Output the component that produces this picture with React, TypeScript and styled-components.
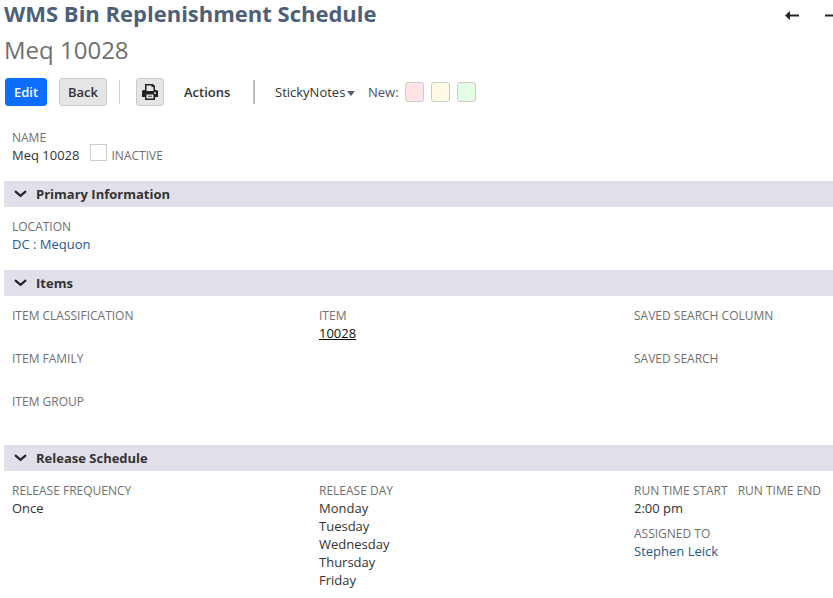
import React from 'react'
import styled, { createGlobalStyle } from 'styled-components'

const GlobalStyle = createGlobalStyle`
    html, body {
        margin: 0;
        padding: 0;
        background: #fff;
        overflow: hidden;
    }

    body {
        font-family: 'Open Sans', 'Liberation Sans', sans-serif;
        font-size: 13px;
        color: #333;
    }
`

const Page = styled.div`
    width: 833px;
    height: 598px;
    overflow: hidden;
    box-sizing: border-box;
    padding-left: 4px;
`

const TitleRow = styled.div`
    display: flex;
    justify-content: space-between;
    height: 27px;
`

const Title = styled.h1`
    margin: 0;
    font-size: 22px;
    line-height: 26px;
    font-weight: 700;
    color: #4d5f79;
    white-space: nowrap;
`

const NavIcons = styled.div`
    display: flex;
    flex-shrink: 0;
    align-items: flex-start;
    gap: 26px;
    padding-top: 11px;
    margin-right: -6px;
`

const Subtitle = styled.h2`
    margin: 6px 0 0;
    font-size: 24px;
    line-height: 34px;
    font-weight: 400;
    color: #6f6f6f;
`

const Toolbar = styled.div`
    display: flex;
    align-items: center;
    height: 28px;
    margin: 11px 0 0 1px;
`

const Button = styled.div<{ $primary?: boolean; $width: number; $after: number }>`
    box-sizing: border-box;
    width: ${({ $width }) => $width}px;
    height: 28px;
    margin-right: ${({ $after }) => $after}px;
    display: flex;
    align-items: center;
    justify-content: center;
    border-radius: 3px;
    font-size: 13px;
    font-weight: 600;
    color: ${({ $primary }) => ($primary ? '#fff' : '#333')};
    background: ${({ $primary }) => ($primary ? '#0d6efd' : '#e5e5e5')};
    border: 1px solid ${({ $primary }) => ($primary ? '#0d6efd' : '#ccc')};
`

const ToolbarDivider = styled.div<{ $strong?: boolean; $after: number }>`
    width: ${({ $strong }) => ($strong ? 2 : 1)}px;
    height: 24px;
    margin-right: ${({ $after }) => $after}px;
    background: ${({ $strong }) => ($strong ? '#bdbdbd' : '#d0d0d0')};
`

const ActionsLabel = styled.span`
    width: 69px;
    font-size: 13px;
    font-weight: 600;
    color: #333;
`

const StickyLabel = styled.span`
    display: flex;
    align-items: center;
    gap: 2px;
    width: 93px;
    font-size: 13px;
    color: #333;
`

const Caret = styled.span`
    width: 0;
    height: 0;
    margin-top: 2px;
    border-left: 4px solid transparent;
    border-right: 4px solid transparent;
    border-top: 5px solid #4d5f79;
`

const NewLabel = styled.span`
    width: 36px;
    margin-right: 1px;
    font-size: 13px;
    color: #4a5568;
`

const Swatch = styled.div<{ $color: string }>`
    box-sizing: border-box;
    width: 19px;
    height: 20px;
    margin-right: 7px;
    border: 1px solid #ccc;
    border-radius: 3px;
    background: ${({ $color }) => $color};
`

const NameRow = styled.div`
    padding: 22px 0 0 8px;
    height: 53px;
    box-sizing: content-box;
`

const FieldLabel = styled.div`
    margin: 1px 0 -1px;
    font-size: 12px;
    line-height: 18px;
    color: #6f6f6f;
    text-transform: uppercase;
    white-space: nowrap;
`

const FieldValue = styled.div<{ $link?: boolean }>`
    font-size: 13px;
    line-height: 18px;
    white-space: nowrap;
    color: ${({ $link }) => ($link ? '#255a92' : '#333')};
`

const Underlined = styled.span`
    color: #111;
    text-decoration: underline;
`

const InlineField = styled.div`
    display: flex;
    align-items: flex-end;
    margin-top: -1px;
`

const Checkbox = styled.span`
    box-sizing: border-box;
    align-self: flex-start;
    width: 17px;
    height: 17px;
    margin: -2px 5px 0 10px;
    border: 1px solid #ccc;
`

const SectionBar = styled.div`
    display: flex;
    align-items: center;
    height: 26px;
    padding-left: 10px;
    background: #e1dfe9;
    font-size: 13px;
    font-weight: 700;
    color: #333;
    gap: 9px;
`

const SectionBody = styled.div<{ $height: number }>`
    height: ${({ $height }) => $height}px;
    box-sizing: border-box;
    padding: 10px 0 0 8px;
`

const Columns = styled.div`
    display: grid;
    grid-template-columns: 307px 315px 1fr;
`

const Column = styled.div`
    display: flex;
    flex-direction: column;
`

const FieldBlock = styled.div<{ $height?: number }>`
    ${({ $height }) => ($height ? `height: ${$height}px;` : '')}
`

const TimeRow = styled.div`
    display: flex;
    gap: 10px;
    height: 43px;
`

const Chevron = () => (
    <svg width="13" height="8" viewBox="0 0 13 8" fill="none">
        <path d="M1 1.200 6.500 5.800 12 1.200" stroke="#222" strokeWidth="2.200" />
    </svg>
)

const Arrow = ({ flip }: { flip?: boolean }) => (
    <svg
        width="14"
        height="9"
        viewBox="0 0 14 9"
        style={flip ? { transform: 'scaleX(-1)' } : undefined}
    >
        <path d="M0 4.500 5 0v3.500h9v2H5V9z" fill="#222" />
    </svg>
)

const PrintIcon = () => (
    <svg width="18" height="18" viewBox="0 0 18 18">
        <path
            fillRule="evenodd"
            d="M4 1h8l2 2v4h1.500A1.500 1.500 0 0 1 17 8.500V14h-3v3H4v-3H1V8.500A1.500 1.500 0 0 1 2.500 7H4zM5.500 2.500V8h7V4h-2V2.500zM5.500 11.500V15.500h7v-4zM14 9a1 1 0 1 0 0 2 1 1 0 0 0 0-2z"
            fill="#222"
        />
        <path d="M7 12.800h4v.8H7z" fill="#222" />
    </svg>
)

const Field = ({ label, value, link }: { label: string; value?: React.ReactNode; link?: boolean }) => (
    <>
        <FieldLabel>{label}</FieldLabel>
        {value != null && <FieldValue $link={link}>{value}</FieldValue>}
    </>
)

const Section = ({ title, height, children }: { title: string; height: number; children: React.ReactNode }) => (
    <>
        <SectionBar>
            <Chevron />
            {title}
        </SectionBar>
        <SectionBody $height={height}>{children}</SectionBody>
    </>
)

export default function App() {
    return (
        <Page>
            <GlobalStyle />
            <TitleRow>
                <Title>WMS Bin Replenishment Schedule</Title>
                <NavIcons>
                    <Arrow />
                    <Arrow flip />
                </NavIcons>
            </TitleRow>
            <Subtitle>Meq 10028</Subtitle>
            <Toolbar>
                <Button $primary $width={42} $after={12}>Edit</Button>
                <Button $width={48} $after={12}>Back</Button>
                <ToolbarDivider $after={16} />
                <Button $width={28} $after={20}><PrintIcon /></Button>
                <ActionsLabel>Actions</ActionsLabel>
                <ToolbarDivider $strong $after={20} />
                <StickyLabel>StickyNotes<Caret /></StickyLabel>
                <NewLabel>New:</NewLabel>
                <Swatch $color="#ffe3e6" />
                <Swatch $color="#fefae3" />
                <Swatch $color="#e3fde3" />
            </Toolbar>
            <NameRow>
                <FieldLabel>Name</FieldLabel>
                <InlineField>
                    <FieldValue>Meq 10028</FieldValue>
                    <Checkbox />
                    <FieldLabel>Inactive</FieldLabel>
                </InlineField>
            </NameRow>
            <Section title="Primary Information" height={63}>
                <Field label="Location" value="DC : Mequon" link />
            </Section>
            <Section title="Items" height={149}>
                <Columns>
                    <Column>
                        <FieldBlock $height={43}><Field label="Item Classification" /></FieldBlock>
                        <FieldBlock $height={43}><Field label="Item Family" /></FieldBlock>
                        <FieldBlock><Field label="Item Group" /></FieldBlock>
                    </Column>
                    <Column>
                        <Field label="Item" value={<Underlined>10028</Underlined>} />
                    </Column>
                    <Column>
                        <FieldBlock $height={43}><Field label="Saved Search Column" /></FieldBlock>
                        <FieldBlock><Field label="Saved Search" /></FieldBlock>
                    </Column>
                </Columns>
            </Section>
            <Section title="Release Schedule" height={127}>
                <Columns>
                    <Column>
                        <Field label="Release Frequency" value="Once" />
                    </Column>
                    <Column>
                        <FieldLabel>Release Day</FieldLabel>
                        <FieldValue>Monday</FieldValue>
                        <FieldValue>Tuesday</FieldValue>
                        <FieldValue>Wednesday</FieldValue>
                        <FieldValue>Thursday</FieldValue>
                        <FieldValue>Friday</FieldValue>
                    </Column>
                    <Column>
                        <TimeRow>
                            <FieldBlock><Field label="Run Time Start" value="2:00 pm" /></FieldBlock>
                            <FieldBlock><Field label="Run Time End" /></FieldBlock>
                        </TimeRow>
                        <Field label="Assigned To" value="Stephen Leick" link />
                    </Column>
                </Columns>
            </Section>
        </Page>
    )
}
